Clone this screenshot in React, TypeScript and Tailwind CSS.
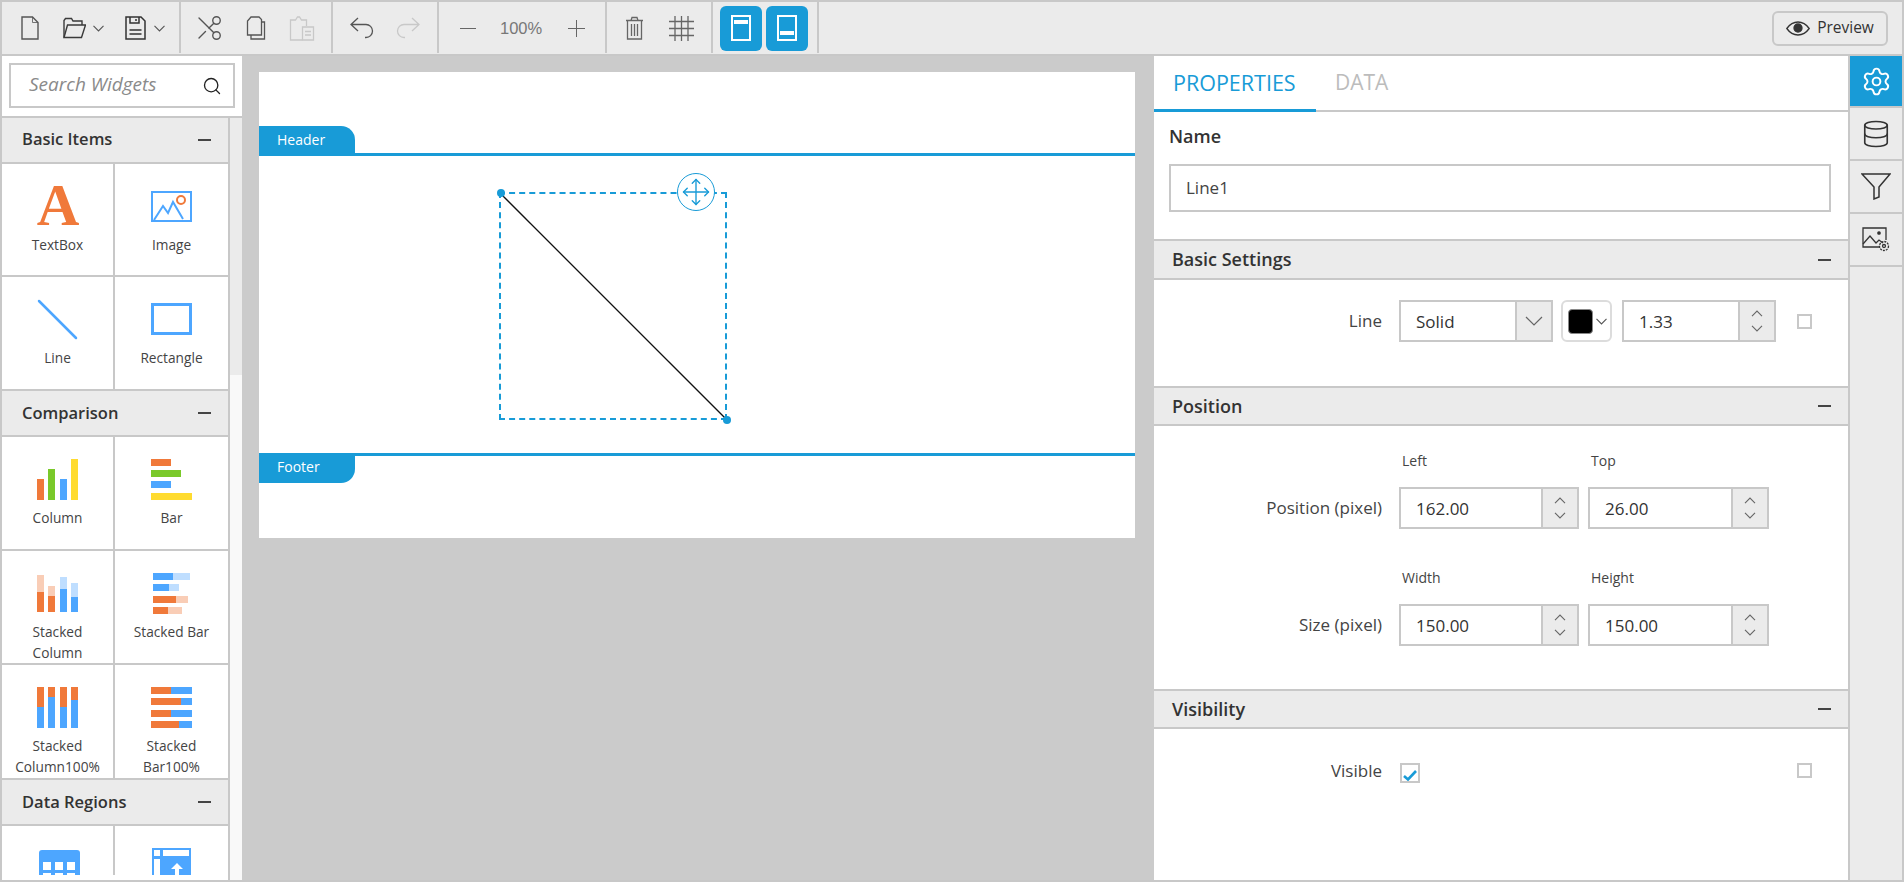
import type { ReactNode } from 'react'
import { Database, Move, Scissors, Search, Settings } from 'lucide-react'

const ORANGE = '#f0793a'
const BLUE = '#4da6ff'
const GREEN = '#7ac92a'
const YELLOW = '#ffdb2f'
const LIGHT_ORANGE = '#f9cdb6'
const LIGHT_BLUE = '#bfdeff'

const Chevron = ({ w = 11, color = '#555' }: { w?: number; color?: string }) => (
  <svg width={w} height={7} viewBox="0 0 11 7" fill="none" stroke={color} strokeWidth="1.1">
    <path d="M.5.8 5.500 6l5-5.200" />
  </svg>
)

const Sep = () => <div className="w-[2px] h-[51px] bg-[#c8c8c8] shrink-0" />

const Toolbar = () => (
  <div className="h-[54px] shrink-0 flex items-start border-b-2 border-[#c8c8c8] bg-[#ebebeb]">
    <div className="w-[177px] h-[52px] pl-[19px] flex items-center shrink-0">
      <svg width="18" height="24" viewBox="0 0 18 24" fill="none" stroke="#555" strokeWidth="1.4">
        <path d="M1 1h10.500L17 6.500V23H1z" />
        <path d="M11.500 1v5.500H17" strokeWidth=".8" />
      </svg>
      <svg className="ml-[24px]" width="23" height="22" viewBox="0 0 23 22" fill="none" stroke="#3a3a3a" strokeWidth="1.4">
        <path d="M1 20.500V3.500L2.500 1.500h6L10 4h9v4" />
        <path d="M1 20.500h17.500L22.500 8H4.500z" />
      </svg>
      <div className="ml-[7px]"><Chevron /></div>
      <svg className="ml-[21px]" width="21" height="24" viewBox="0 0 21 24" fill="none" stroke="#333" strokeWidth="1.5">
        <path d="M1 1h15l4 4v18H1z" />
        <path d="M5 1v6h9V1M11 3v2M4.500 14h12M4.500 18h12" />
      </svg>
      <div className="ml-[8px]"><Chevron /></div>
    </div>
    <Sep />
    <div className="w-[150px] h-[52px] pl-[13px] flex items-center shrink-0">
      <Scissors size={30} strokeWidth={1.1} color="#555" className="-scale-x-100" />
      <svg className="ml-[22px]" width="20" height="24" viewBox="0 0 20 24" fill="none" stroke="#555" strokeWidth="1.3">
        <path d="M5 1h8l2.500 2.500V19H1.500V5z" />
        <path d="M15.500 6H18.500V23H5V19" />
      </svg>
      <svg className="ml-[23px]" width="26" height="25" viewBox="0 0 25 25" fill="none" stroke="#c8c8c8" strokeWidth="1.3">
        <path d="M13 24H1V4h5l2-3h2l2 3h5v6" />
        <path d="M13 11h11v13H13zM15.500 15.500h6M15.500 19h6" />
      </svg>
    </div>
    <Sep />
    <div className="w-[104px] h-[52px] pl-[17px] flex items-center shrink-0">
      <svg width="24" height="22" viewBox="0 0 24 22" fill="none" stroke="#555" strokeWidth="1.3">
        <path d="M8 1 1 7.500 8 14M1 7.500h15a6.500 6.500 0 0 1 0 13h-1" />
      </svg>
      <svg className="ml-[22px]" width="24" height="22" viewBox="0 0 24 22" fill="none" stroke="#c8c8c8" strokeWidth="1.3">
        <path d="M16 1l7 6.500L16 14M23 7.500H8a6.500 6.500 0 0 0 0 13h1" />
      </svg>
    </div>
    <Sep />
    <div className="w-[166px] h-[52px] pl-[21px] flex items-center shrink-0">
      <div className="w-[16px] h-[1px] bg-[#666]" />
      <span className="ml-[24px] w-[43px] text-[16.5px] text-[#777] font-['Liberation_Sans',sans-serif]">100%</span>
      <svg className="ml-[25px]" width="17" height="17" viewBox="0 0 17 17" stroke="#666" strokeWidth="1">
        <path d="M0 8.500h17M8.500 0v17" />
      </svg>
    </div>
    <Sep />
    <div className="w-[104px] h-[52px] pl-[18px] flex items-center shrink-0">
      <svg width="19" height="24" viewBox="0 0 19 24" fill="none" stroke="#666" strokeWidth="1.300">
        <path d="M1 4.500h17M6 4.500 7 1.500h5l1 3M2.500 4.500V23h14V4.500M6.500 8v12M9.500 8v12M12.500 8v12" />
      </svg>
      <svg className="ml-[25px]" width="25" height="25" viewBox="0 0 25 25" stroke="#666" strokeWidth="1.300">
        <path d="M0 5.500h25M0 12.500h25M0 19.500h25M6 0v25M12.500 0v25M19 0v25" />
      </svg>
    </div>
    <Sep />
    <div className="w-[104px] h-[52px] pl-[7px] flex items-center gap-[4px] shrink-0">
      <div className="w-[42px] h-[45px] rounded-md bg-[#189bd7] flex items-center justify-center">
        <div className="w-[20px] h-[26px] border-2 border-white pt-[3px] px-[1px]">
          <div className="h-[4px] bg-white" />
        </div>
      </div>
      <div className="w-[42px] h-[45px] rounded-md bg-[#189bd7] flex items-center justify-center">
        <div className="w-[20px] h-[26px] border-2 border-white pt-[14px] px-[1px]">
          <div className="h-[4px] bg-white" />
        </div>
      </div>
    </div>
    <Sep />
    <div className="flex-1 h-[52px] flex items-center justify-end pr-[14px]">
      <div className="w-[116px] h-[35px] rounded-md border-2 border-[#c8c8c8] flex items-center justify-center gap-[7px]">
        <svg width="24" height="15" viewBox="0 0 24 15" fill="none" stroke="#333" strokeWidth="1.300">
          <path d="M.8 7.500C4 3 8 1 12 1s8 2 11.200 6.500C20 12 16 14 12 14S4 12 .8 7.500z" />
          <circle cx="12" cy="7" r="4" fill="#333" />
        </svg>
        <span className="text-[15.5px] text-[#333]">Preview</span>
      </div>
    </div>
  </div>
)

const Minus = () => <div className="w-[13px] h-[2px] bg-[#444]" />

const WidgetHead = ({ title, first, last }: { title: string; first?: boolean; last?: boolean }) => (
  <div className={`h-[46px] shrink-0 flex items-center justify-between pl-[20px] pr-[17px] bg-[#ebebeb] border-b-2 border-[#c8c8c8] ${last ? 'border-t-2 h-[48px]' : ''}`}>
    <span className={`text-[16.5px] font-semibold text-[#333] ${first ? 'pb-[1px]' : 'pt-[1px]'}`}>{title}</span>
    <Minus />
  </div>
)

const Bars = ({ children }: { children: ReactNode }) => (
  <svg width="41" height="41" viewBox="0 0 41 41" shapeRendering="crispEdges">{children}</svg>
)

const Cell = ({ label, icon, last }: { label: ReactNode; icon: ReactNode; last?: boolean }) => (
  <div className={`w-[113px] pt-[21px] flex flex-col items-center ${last ? '' : 'border-r-2 border-[#c8c8c8]'}`}>
    <div className="h-[42px] flex items-center justify-center">{icon}</div>
    <div className="mt-[7px] text-[13.7px] leading-[21px] text-[#444] text-center whitespace-nowrap">{label}</div>
  </div>
)

const Row = ({ h, children, end }: { h: string; children: ReactNode; end?: boolean }) => (
  <div className={`${h} shrink-0 flex bg-white ${end ? 'border-b-2 border-[#c8c8c8]' : ''}`}>{children}</div>
)

const WidgetPanel = () => (
  <div className="w-[240px] shrink-0 flex flex-col bg-white">
    <div className="h-[62px] shrink-0 px-[7px] pt-[7px] border-b-2 border-[#c8c8c8]">
      <div className="h-[45px] w-[226px] border-2 border-[#c8c8c8] flex items-center pl-[18px] pr-[11px] justify-between">
        <span className="text-[19px] italic text-[#8a8a8a] pb-[2px]">Search Widgets</span>
        <Search size={20} strokeWidth={1.6} color="#222" />
      </div>
    </div>
    <div className="flex-1 flex min-h-0">
      <div className="w-[228px] h-full overflow-hidden border-r-2 border-[#c8c8c8] flex flex-col">
        <WidgetHead title="Basic Items" first />
        <Row h="h-[113px]" end>
          <Cell
            label="TextBox"
            icon={
              <svg className="overflow-visible" width="44" height="42" viewBox="0 0 44 42">
                <text x="22" y="40" textAnchor="middle" fontFamily="Liberation Serif, serif" fontWeight="700" fontSize="59" fill={ORANGE}>A</text>
              </svg>
            }
          />
          <Cell
            last
            label="Image"
            icon={
              <svg width="41" height="31" viewBox="0 0 41 31" fill="none" stroke={BLUE} strokeWidth="2">
                <rect x="1" y="1" width="39" height="29" />
                <path d="M3 29 12 15l5 7 5-11 10 17" />
                <circle cx="30" cy="9" r="4" stroke={ORANGE} />
              </svg>
            }
          />
        </Row>
        <Row h="h-[114px]" end>
          <Cell
            label="Line"
            icon={
              <svg width="41" height="41" viewBox="0 0 41 41" stroke={BLUE} strokeWidth="2.500" strokeLinecap="round">
                <path d="M2 2l37 37" />
              </svg>
            }
          />
          <Cell
            last
            label="Rectangle"
            icon={
              <svg width="41" height="32" viewBox="0 0 41 32" fill="none" stroke={BLUE} strokeWidth="3">
                <rect x="1.500" y="1.500" width="38" height="29" />
              </svg>
            }
          />
        </Row>
        <WidgetHead title="Comparison" />
        <Row h="h-[114px]" end>
          <Cell
            label="Column"
            icon={
              <Bars>
                <rect x="0" y="20" width="7" height="21" fill={ORANGE} />
                <rect x="11" y="10" width="7" height="31" fill={GREEN} />
                <rect x="23" y="20" width="7" height="21" fill={BLUE} />
                <rect x="34" y="0" width="7" height="41" fill={YELLOW} />
              </Bars>
            }
          />
          <Cell
            last
            label="Bar"
            icon={
              <Bars>
                <rect x="0" y="0" width="20" height="7" fill={ORANGE} />
                <rect x="0" y="11" width="30" height="7" fill={GREEN} />
                <rect x="0" y="22" width="20" height="7" fill={BLUE} />
                <rect x="0" y="34" width="41" height="7" fill={YELLOW} />
              </Bars>
            }
          />
        </Row>
        <Row h="h-[114px]" end>
          <Cell
            label={<>Stacked<br />Column</>}
            icon={
              <Bars>
                <rect x="0" y="2" width="7" height="17" fill={LIGHT_ORANGE} />
                <rect x="0" y="19" width="7" height="20" fill={ORANGE} />
                <rect x="11" y="13" width="7" height="10" fill={LIGHT_ORANGE} />
                <rect x="11" y="23" width="7" height="16" fill={ORANGE} />
                <rect x="23" y="4" width="7" height="12" fill={LIGHT_BLUE} />
                <rect x="23" y="16" width="7" height="23" fill={BLUE} />
                <rect x="34" y="10" width="7" height="14" fill={LIGHT_BLUE} />
                <rect x="34" y="24" width="7" height="15" fill={BLUE} />
              </Bars>
            }
          />
          <Cell
            last
            label="Stacked Bar"
            icon={
              <Bars>
                <rect x="2" y="0" width="37" height="7" fill={LIGHT_BLUE} />
                <rect x="2" y="0" width="20" height="7" fill={BLUE} />
                <rect x="2" y="11" width="26" height="7" fill={LIGHT_BLUE} />
                <rect x="2" y="11" width="16" height="7" fill={BLUE} />
                <rect x="2" y="23" width="35" height="7" fill={LIGHT_ORANGE} />
                <rect x="2" y="23" width="23" height="7" fill={ORANGE} />
                <rect x="2" y="34" width="29" height="7" fill={LIGHT_ORANGE} />
                <rect x="2" y="34" width="15" height="7" fill={ORANGE} />
              </Bars>
            }
          />
        </Row>
        <Row h="h-[113px]">
          <Cell
            label={<>Stacked<br />Column100%</>}
            icon={
              <Bars>
                {[[0, 20], [11, 10], [23, 20], [34, 13]].map(([x, top]) => (
                  <g key={x}>
                    <rect x={x} y="0" width="7" height="41" fill={BLUE} />
                    <rect x={x} y="0" width="7" height={top} fill={ORANGE} />
                  </g>
                ))}
              </Bars>
            }
          />
          <Cell
            last
            label={<>Stacked<br />Bar100%</>}
            icon={
              <Bars>
                {[[0, 20], [11, 30], [23, 20], [34, 28]].map(([y, w]) => (
                  <g key={y}>
                    <rect x="0" y={y} width="41" height="7" fill={BLUE} />
                    <rect x="0" y={y} width={w} height="7" fill={ORANGE} />
                  </g>
                ))}
              </Bars>
            }
          />
        </Row>
        <WidgetHead title="Data Regions" last />
        <div className="h-[49px] shrink-0 flex overflow-hidden bg-white">
          <div className="w-[113px] h-[49px] border-r-2 border-[#c8c8c8] pt-[24px] pl-[37px]">
            <svg width="41" height="25" viewBox="0 0 41 25">
              <path d="M3 0h35a3 3 0 0 1 3 3v22H0V3a3 3 0 0 1 3-3z" fill={BLUE} />
              <path d="M4 12h8v8H4zM16 12h8v8h-8zM28 12h8v8h-8zM4 23h8v2H4zM16 23h8v2h-8zM28 23h8v2h-8z" fill="#fff" />
            </svg>
          </div>
          <div className="w-[113px] h-[49px] pt-[22px] pl-[37px]">
            <svg width="39" height="27" viewBox="0 0 39 27">
              <rect width="39" height="27" fill={BLUE} />
              <path d="M2 2h6v6H2zM11 2h26v6H11zM2 11h6v16H2z" fill="#fff" />
              <path d="M25 15l6 6h-4v6h-4v-6h-4z" fill="#fff" />
            </svg>
          </div>
        </div>
      </div>
      <div className="w-[12px] flex flex-col bg-[#f9f9f9]">
        <div className="h-[257px] bg-[#ebebeb]" />
      </div>
    </div>
  </div>
)

const Canvas = () => (
  <div className="w-[912px] shrink-0 bg-[#cbcbcb] pt-[16px] pl-[17px]">
    <div className="relative w-[876px] h-[466px] bg-white">
      <div className="h-[54px]" />
      <div className="w-[96px] h-[27px] bg-[#189bd7] rounded-tr-[14px] pl-[18px] text-[14px] leading-[27px] text-white">Header</div>
      <div className="h-[3px] bg-[#189bd7]" />
      <div className="relative h-[297px]">
        <div className="absolute left-[240px] top-[36px] w-[228px] h-[228px] border-2 border-dashed border-[#189bd7]">
          <svg className="absolute left-0 top-0" width="224" height="224" viewBox="0 0 224 224" stroke="#111" strokeWidth="1.300">
            <path d="M2 2l222 222" />
          </svg>
          <div className="absolute -left-[4px] -top-[5px] w-[8px] h-[8px] rounded-full bg-[#189bd7]" />
          <div className="absolute -right-[6px] -bottom-[6px] w-[8px] h-[8px] rounded-full bg-[#189bd7]" />
          <div className="absolute left-[176px] -top-[21px] w-[38px] h-[38px] rounded-full border border-[#189bd7] bg-white flex items-center justify-center">
            <Move size={30} strokeWidth={1.1} color="#189bd7" />
          </div>
        </div>
      </div>
      <div className="h-[3px] bg-[#189bd7]" />
      <div className="w-[96px] h-[27px] bg-[#189bd7] rounded-br-[14px] pl-[18px] text-[14px] leading-[22px] text-white">Footer</div>
    </div>
  </div>
)

const Spin = () => (
  <div className="w-[36px] h-full bg-[#ebebeb] border-l-2 border-[#c8c8c8] flex flex-col items-center justify-center gap-[8px] shrink-0">
    <div className="rotate-180"><Chevron w={12} color="#666" /></div>
    <Chevron w={12} color="#666" />
  </div>
)

const NumberBox = ({ value, w }: { value: string; w: string }) => (
  <div className={`${w} h-[42px] border-2 border-[#c8c8c8] flex shrink-0`}>
    <div className="flex-1 pl-[15px] text-[17px] leading-[39px] text-[#333]">{value}</div>
    <Spin />
  </div>
)

const PanelHead = ({ title, h }: { title: string; h: string }) => (
  <div className={`${h} shrink-0 border-y-2 border-[#c8c8c8] bg-[#ebebeb] flex items-center justify-between pl-[18px] pr-[17px]`}>
    <span className="text-[18px] font-semibold text-[#333]">{title}</span>
    <Minus />
  </div>
)

const Check = () => <div className="w-[15px] h-[15px] border-2 border-[#c8c8c8] shrink-0" />

const FieldLabel = ({ text }: { text: string }) => (
  <div className="w-[228px] shrink-0 text-right text-[17px] text-[#444]">{text}</div>
)

const PropertiesPanel = () => (
  <div className="w-[696px] shrink-0 flex flex-col bg-white border-r-2 border-[#c8c8c8]">
    <div className="h-[56px] shrink-0 flex border-b-2 border-[#c8c8c8]">
      <div className="w-[162px] -mb-[2px] border-b-[3px] border-[#189bd7] pl-[19px] pt-[11px] text-[21.5px] font-medium text-[#189bd7]">PROPERTIES</div>
      <div className="pl-[19px] pt-[11px] text-[21px] font-medium text-[#bcbcbc]">DATA</div>
    </div>
    <div className="h-[127px] shrink-0 px-[15px] pr-[17px] pt-[12px]">
      <div className="h-[24px] text-[18px] leading-[24px] font-semibold text-[#333]">Name</div>
      <div className="mt-[16px] h-[48px] border-2 border-[#c8c8c8] pl-[15px] text-[17px] leading-[44px] text-[#444]">Line1</div>
    </div>
    <PanelHead title="Basic Settings" h="h-[41px]" />
    <div className="h-[106px] shrink-0 pt-[20px]">
      <div className="h-[42px] flex items-center">
        <FieldLabel text="Line" />
        <div className="ml-[17px] w-[154px] h-[42px] border-2 border-[#c8c8c8] flex">
          <div className="flex-1 pl-[15px] text-[17px] leading-[39px] text-[#333]">Solid</div>
          <div className="w-[36px] bg-[#ebebeb] border-l-2 border-[#c8c8c8] flex items-center justify-center">
            <svg width="18" height="10" viewBox="0 0 18 10" fill="none" stroke="#666" strokeWidth="1.200">
              <path d="M1 1l8 8 8-8" />
            </svg>
          </div>
        </div>
        <div className="ml-[8px] w-[51px] h-[42px] rounded-md border-2 border-[#dcdcdc] flex items-center pl-[5px] gap-[3px]">
          <div className="w-[25px] h-[25px] rounded-[4px] bg-black border border-[#888]" />
          <Chevron w={11} color="#555" />
        </div>
        <div className="ml-[10px]"><NumberBox value="1.33" w="w-[154px]" /></div>
        <div className="ml-[21px]"><Check /></div>
      </div>
    </div>
    <PanelHead title="Position" h="h-[40px]" />
    <div className="h-[263px] shrink-0 pt-[25px]">
      <div className="flex h-[20px] pl-[247px] text-[14px] leading-[20px] text-[#444]">
        <div className="w-[190px] pl-[1px]">Left</div>
        <div>Top</div>
      </div>
      <div className="mt-[16px] flex items-center">
        <FieldLabel text="Position (pixel)" />
        <div className="ml-[17px]"><NumberBox value="162.00" w="w-[180px]" /></div>
        <div className="ml-[9px]"><NumberBox value="26.00" w="w-[181px]" /></div>
      </div>
      <div className="mt-[39px] flex h-[20px] pl-[247px] text-[14px] leading-[20px] text-[#444]">
        <div className="w-[190px] pl-[1px]">Width</div>
        <div>Height</div>
      </div>
      <div className="mt-[16px] flex items-center">
        <FieldLabel text="Size (pixel)" />
        <div className="ml-[17px]"><NumberBox value="150.00" w="w-[180px]" /></div>
        <div className="ml-[9px]"><NumberBox value="150.00" w="w-[181px]" /></div>
      </div>
    </div>
    <PanelHead title="Visibility" h="h-[40px]" />
    <div className="flex-1 pt-[34px]">
      <div className="flex items-start">
        <div className="w-[228px] text-right text-[17px] leading-[15px] text-[#444]">Visible</div>
        <div className="ml-[18px] w-[20px] h-[20px] border-2 border-[#c8c8c8] flex items-end justify-center">
          <svg width="14" height="11" viewBox="0 0 14 11" fill="none" stroke="#189bd7" strokeWidth="2.600">
            <path d="M1 6l4 3.500L13 1" />
          </svg>
        </div>
        <div className="ml-[377px]"><Check /></div>
      </div>
    </div>
  </div>
)

const SideTabs = () => (
  <div className="w-[52px] shrink-0 flex flex-col bg-[#ebebeb]">
    <div className="h-[52px] bg-[#189bd7] border-b-2 border-[#c8c8c8] flex items-center justify-center">
      <Settings size={31} strokeWidth={1.5} color="#fff" />
    </div>
    <div className="h-[53px] border-b-2 border-[#c8c8c8] flex items-center justify-center">
      <Database size={30} strokeWidth={1.3} color="#333" />
    </div>
    <div className="h-[53px] border-b-2 border-[#c8c8c8] flex items-center justify-center">
      <svg width="30" height="27" viewBox="0 0 30 27" fill="none" stroke="#333" strokeWidth="1.500">
        <path d="M1 1h28L18 14v10l-5 2V14z" />
      </svg>
    </div>
    <div className="h-[53px] border-b-2 border-[#c8c8c8] flex items-center justify-center">
      <svg width="28" height="25" viewBox="0 0 28 25" fill="none" stroke="#333" strokeWidth="1.300">
        <path d="M18 20H1V1h23v12" />
        <path d="M1 17l7-8 6 7 3-3 4 3" />
        <circle cx="17" cy="6" r="1.200" fill="#333" />
        <circle cx="22" cy="19" r="4.500" strokeDasharray="2 1" />
        <circle cx="22" cy="19" r="1.500" />
      </svg>
    </div>
  </div>
)

export default function App() {
  return (
    <div className="w-[1904px] h-[882px] border-2 border-[#c8c8c8] flex flex-col overflow-hidden bg-white font-['Open_Sans',sans-serif]">
      <Toolbar />
      <div className="flex-1 flex min-h-0">
        <WidgetPanel />
        <Canvas />
        <PropertiesPanel />
        <SideTabs />
      </div>
    </div>
  )
}
